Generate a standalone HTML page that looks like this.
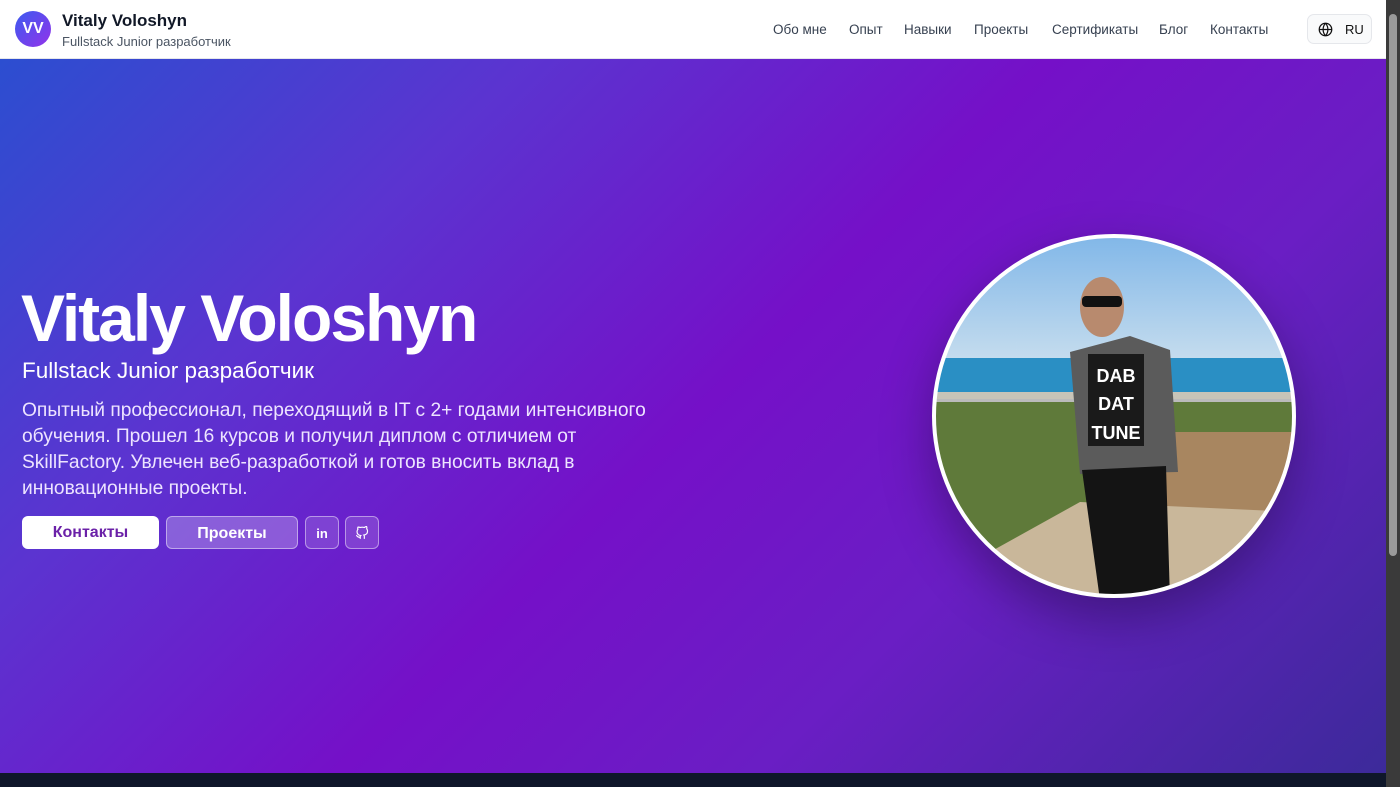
<!DOCTYPE html>
<html><head><meta charset="utf-8"><style>
*{margin:0;padding:0;box-sizing:border-box}
body{width:1400px;height:787px;overflow:hidden;font-family:"Liberation Sans",sans-serif;background:#0f172a;position:relative}
.hdr{position:absolute;left:0;top:0;width:1386px;height:59px;background:#fff;border-bottom:1px solid #e5e7eb}
.logo{position:absolute;left:15px;top:11px;width:36px;height:36px;border-radius:50%;background:linear-gradient(135deg,#3b5bf0,#9333ea);color:#fff;font-weight:bold;font-size:16px;text-align:center;line-height:36px}
.nm{position:absolute;left:62px;top:11px;font-size:17px;font-weight:bold;color:#111827}
.sub{position:absolute;left:62px;top:34px;font-size:13px;color:#4b5563}
.nav{position:absolute;top:22px;font-size:13.5px;color:#374151}
.lang{position:absolute;left:1307px;top:14px;width:65px;height:30px;border:1px solid #e5e7eb;border-radius:7px;background:#f9fafb;font-size:13px;color:#111;}
.hero{position:absolute;left:0;top:59px;width:1386px;height:714px;background:linear-gradient(135deg,#2c4ed0 0%,#5b34d0 25%,#7510c8 50%,#6a1ec4 70%,#3c2a9a 100%)}
.scroll{position:absolute;left:1386px;top:0;width:14px;height:787px;background:#3a3a3a}
.thumb{position:absolute;left:1389px;top:14px;width:8px;height:542px;background:#9a9a9a;border-radius:4px}
h1{position:absolute;left:21px;top:280px;font-size:66px;font-weight:bold;color:#fff;letter-spacing:-2px}
.t2{position:absolute;left:22px;top:358px;font-size:22.5px;color:#fff}
.p{position:absolute;left:22px;top:398px;width:645px;font-size:19.2px;line-height:26px;color:#ede4ff}
.b{position:absolute;top:516px;height:33px;border-radius:6px;font-size:16px;font-weight:bold;text-align:center;line-height:33px}
</style></head><body>
<div class="hdr">
<div class="logo">VV</div>
<div class="nm">Vitaly Voloshyn</div>
<div class="sub">Fullstack Junior разработчик</div>
<div class="nav" style="left:773px">Обо мне</div>
<div class="nav" style="left:849px">Опыт</div>
<div class="nav" style="left:904px">Навыки</div>
<div class="nav" style="left:974px">Проекты</div>
<div class="nav" style="left:1052px">Сертификаты</div>
<div class="nav" style="left:1159px">Блог</div>
<div class="nav" style="left:1210px">Контакты</div>
<div class="lang"><svg style="position:absolute;left:10px;top:7px" width="15" height="15" viewBox="0 0 24 24" fill="none" stroke="#111" stroke-width="2"><circle cx="12" cy="12" r="10"/><path d="M2 12h20M12 2a15 15 0 0 1 0 20M12 2a15 15 0 0 0 0 20"/></svg><span style="position:absolute;left:37px;top:7px">RU</span></div>
</div>
<div class="hero"></div>
<h1>Vitaly Voloshyn</h1>
<div class="t2">Fullstack Junior разработчик</div>
<div class="p">Опытный профессионал, переходящий в IT с 2+ годами интенсивного обучения. Прошел 16 курсов и получил диплом с отличием от SkillFactory. Увлечен веб-разработкой и готов вносить вклад в инновационные проекты.</div>
<div class="b" style="left:22px;width:137px;background:#fff;color:#6b21a8">Контакты</div>
<div class="b" style="left:166px;width:132px;background:rgba(255,255,255,.25);border:1px solid rgba(255,255,255,.45);color:#fff">Проекты</div>
<div class="b" style="left:305px;width:34px;background:rgba(255,255,255,.15);border:1px solid rgba(255,255,255,.45);color:#fff;font-size:13px">in</div>
<div class="b" style="left:345px;width:34px;background:rgba(255,255,255,.15);border:1px solid rgba(255,255,255,.45)"><svg style="margin-top:9px" width="14" height="14" viewBox="0 0 24 24" fill="none" stroke="#fff" stroke-width="2"><path d="M9 19c-5 1.5-5-2.5-7-3m14 6v-3.9a3.4 3.4 0 0 0-.9-2.6c3.1-.4 6.4-1.5 6.4-7a5.4 5.4 0 0 0-1.5-3.7 5 5 0 0 0-.1-3.8s-1.2-.3-3.9 1.5a13.4 13.4 0 0 0-7 0C6.3 1.700 5.1 2 5.1 2a5 5 0 0 0-.1 3.8A5.4 5.4 0 0 0 3.5 9.5c0 5.4 3.3 6.6 6.4 7a3.4 3.4 0 0 0-.9 2.6V22"/></svg></div>
<svg style="position:absolute;left:930px;top:232px;filter:drop-shadow(0 20px 25px rgba(0,0,0,.3))" width="368" height="368" viewBox="0 0 368 368">
<defs><clipPath id="c"><circle cx="184" cy="184" r="180"/></clipPath>
<linearGradient id="sky" x1="0" y1="0" x2="0" y2="1"><stop offset="0" stop-color="#7fb6e8"/><stop offset="1" stop-color="#c6ddee"/></linearGradient></defs>
<g clip-path="url(#c)">
<rect width="368" height="130" fill="url(#sky)"/>
<rect y="126" width="368" height="40" fill="#2a8fc4"/>
<rect y="160" width="368" height="10" fill="#c8c4b8"/>
<rect y="168" width="368" height="200" fill="#5f7a3a"/>
<rect x="230" y="200" width="138" height="110" fill="#a88660"/>
<path d="M60 320 L150 270 L368 280 L368 368 L60 368Z" fill="#c9b79a"/>
<rect y="167" width="368" height="3" fill="#bbb"/>
<ellipse cx="172" cy="75" rx="22" ry="30" fill="#b88a6e"/>
<rect x="152" y="64" width="40" height="11" rx="4" fill="#111"/>
<path d="M140 120 L200 104 L240 118 L248 240 L150 242Z" fill="#5b5b5b"/>
<rect x="158" y="122" width="56" height="92" fill="#1a1a1a"/>
<text x="186" y="150" font-size="18" font-weight="bold" fill="#fff" text-anchor="middle" font-family="Liberation Sans">DAB</text>
<text x="186" y="178" font-size="18" font-weight="bold" fill="#fff" text-anchor="middle" font-family="Liberation Sans">DAT</text>
<text x="186" y="207" font-size="18" font-weight="bold" fill="#fff" text-anchor="middle" font-family="Liberation Sans">TUNE</text>
<path d="M152 238 L236 234 L240 368 L170 368Z" fill="#141414"/>
</g>
<circle cx="184" cy="184" r="180" fill="none" stroke="#fff" stroke-width="4"/>
</svg>
<div class="scroll"></div><div class="thumb"></div>
</body></html>
